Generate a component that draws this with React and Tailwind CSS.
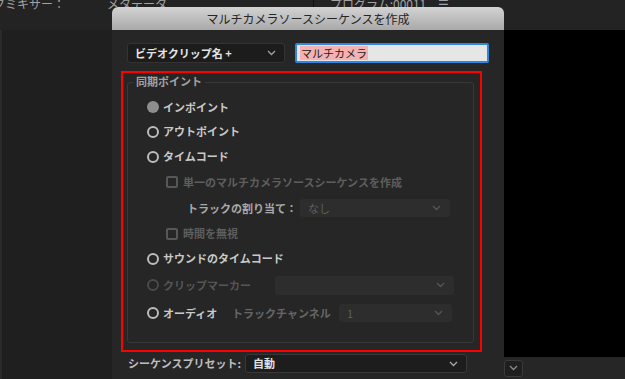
import React from "react";

const font = { fontFamily: '"Noto Sans CJK JP", "Noto Sans", sans-serif' };

function Chevron({ color = "#9a9a9a" }) {
  return (
    <svg width="9" height="6" viewBox="0 0 9 6" fill="none">
      <polyline points="1,1 4.5,4.5 8,1" stroke={color} strokeWidth="1.3" />
    </svg>
  );
}

function Radio({ checked, disabled }) {
  if (checked) return <span className="w-[12px] h-[12px] rounded-full bg-[#8e8e8e] shrink-0" />;
  return (
    <span
      className={
        "w-[12px] h-[12px] rounded-full border-2 shrink-0 " +
        (disabled ? "border-[#4a4a4a]" : "border-[#bcbcbc]")
      }
    />
  );
}

function Check() {
  return <span className="w-[12px] h-[12px] rounded-[2px] border-2 border-[#575757] shrink-0" />;
}

function Select({ w, value, valueClass = "text-[#5f5f5f]", chevron = "#555555" }) {
  return (
    <div className={"h-[18px] rounded-[3px] bg-[#2d2d2d] flex items-center justify-between pl-[8px] pr-[9px] " + w}>
      <span className={"text-[11px] leading-none " + valueClass}>{value}</span>
      <Chevron color={chevron} />
    </div>
  );
}

export default function App() {
  return (
    <div className="relative w-[625px] h-[379px] overflow-hidden bg-[#1f1f1f] flex flex-col" style={font}>
      {/* panel headers behind the dialog */}
      <div className="h-[30px] bg-[#232323] flex items-start text-[12px] leading-none text-[#a3a3a3] shrink-0">
        <span className="ml-[-7px] mt-[-2px] w-[114px]">クミキサー：</span>
        <span className="mt-[-2px] w-[206px]">メタデータ</span>
        <span className="w-px h-[8px] bg-[#111]" />
        <span className="ml-[16px] mt-[-2px]">プログラム:00011</span>
        <span className="ml-[12px] mt-[-2px]">☰</span>
      </div>
      <div className="flex flex-1">
        <div className="w-[504px] border-l-2 border-[#2a2a2a]" />
        <div className="flex-1 flex flex-col">
          <div className="flex-1 bg-black" />
          <div className="h-[22px] bg-[#262626] flex items-center">
            <div className="w-[19px] h-[17px] rounded-[3px] border border-[#3a3a3a] bg-[#1f1f1f] flex items-center justify-center">
              <Chevron color="#8a8a8a" />
            </div>
          </div>
        </div>
      </div>

      {/* dialog window */}
      <div className="absolute left-[112px] top-[7px] w-[392px] h-[372px] flex flex-col bg-[#262626]">
        <div className="h-[23px] shrink-0 rounded-t-[6px] bg-linear-to-b from-[#d3d3d3] to-[#a9a9a9] flex items-center justify-center text-[12px] text-[#262626]">
          マルチカメラソースシーケンスを作成
        </div>

        <div className="flex items-center mt-[13px] pl-[15px]">
          <div className="w-[158px] h-[20px] rounded-[3px] border border-[#333] bg-[#1c1c1c] flex items-center justify-between pl-[7px] pr-[8px]">
            <span className="text-[11px] font-bold leading-none text-[#e4e4e4]">ビデオクリップ名 +</span>
            <Chevron color="#a0a0a0" />
          </div>
          <div className="ml-[10px] w-[194px] h-[20px] rounded-[2px] border-2 border-[#2f86e0] bg-[#e6e6e6] flex items-center pl-[3px]">
            <span className="bg-[#f5b2b2] text-[11px] leading-[14px] text-[#222] px-[1px]">マルチカメラ</span>
          </div>
        </div>

        {/* highlighted group */}
        <div className="mt-[8px] ml-[9px] w-[361px] h-[281px] border-2 border-[#ff0000] pt-[9px] pl-[4px] pr-[6px]">
          <div className="relative h-[261px] border border-[#383838] rounded-[3px] pt-[12px] pl-[19px] text-[11px] leading-none">
            <span className="absolute left-[5px] top-[-7px] px-[3px] bg-[#262626] text-[#a2a2a2] font-bold">同期ポイント</span>

            <div className="h-[24px] flex items-center gap-[4px]">
              <Radio checked />
              <span className="font-bold text-[#c9c9c9]">インポイント</span>
            </div>
            <div className="h-[25px] flex items-center gap-[4px]">
              <Radio />
              <span className="font-bold text-[#c9c9c9]">アウトポイント</span>
            </div>
            <div className="h-[25px] flex items-center gap-[4px]">
              <Radio />
              <span className="font-bold text-[#c9c9c9]">タイムコード</span>
            </div>
            <div className="h-[26px] flex items-center gap-[5px] pl-[19px]">
              <Check />
              <span className="font-bold text-[#5e5e5e]">単一のマルチカメラソースシーケンスを作成</span>
            </div>
            <div className="h-[26px] flex items-center pl-[40px]">
              <span className="font-bold text-[#a9a9a9] w-[113px]">トラックの割り当て：</span>
              <Select w="w-[150px]" value="なし" />
            </div>
            <div className="h-[25px] flex items-center gap-[5px] pl-[19px]">
              <Check />
              <span className="font-bold text-[#5e5e5e]">時間を無視</span>
            </div>
            <div className="h-[25px] flex items-center gap-[4px]">
              <Radio />
              <span className="font-bold text-[#c9c9c9]">サウンドのタイムコード</span>
            </div>
            <div className="h-[28px] flex items-center">
              <Radio disabled />
              <span className="ml-[4px] w-[112px] font-bold text-[#555555]">クリップマーカー</span>
              <Select w="w-[179px] h-[19px]" value="" />
            </div>
            <div className="h-[28px] flex items-center">
              <Radio />
              <span className="ml-[4px] w-[69px] font-bold text-[#c9c9c9]">オーディオ</span>
              <span className="w-[107px] text-[#666666] font-bold">トラックチャンネル</span>
              <Select w="w-[113px]" value="1" />
            </div>
          </div>
        </div>

        <div className="mt-[2px] flex items-center pl-[16px]">
          <span className="w-[117px] text-[11px] font-bold leading-none text-[#bdbdbd]">シーケンスプリセット:</span>
          <div className="w-[222px] h-[19px] rounded-[3px] border border-[#383838] bg-[#1d1d1d] flex items-center justify-between pl-[7px] pr-[8px]">
            <span className="text-[11px] font-bold leading-none text-[#e2e2e2]">自動</span>
            <Chevron color="#a8a8a8" />
          </div>
        </div>
      </div>
    </div>
  );
}
